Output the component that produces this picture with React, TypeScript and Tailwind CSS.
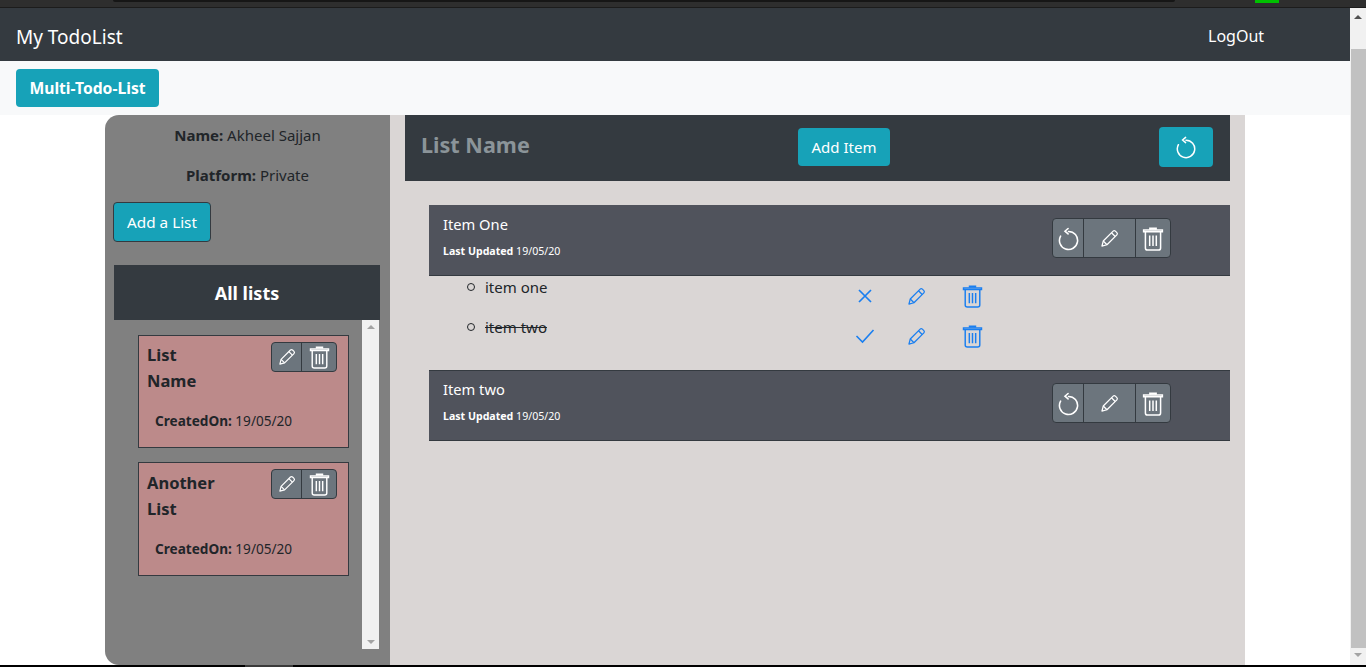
import {FC} from "react";

type IconProps = {className?: string};

const Trash: FC<IconProps> = ({className}) => (
    <svg viewBox="0 0 24 28" fill="none" stroke="currentColor" strokeWidth="1.7" className={className}>
        <path d="M1.5 6.5v-2h21v2z"/>
        <path d="M8.5 4.2V2.6h7v1.6" fill="currentColor"/>
        <path d="M3.5 6.5v18a2.4 2.4 0 0 0 2.4 2.4h12.2a2.4 2.4 0 0 0 2.4-2.4v-18"/>
        <path d="M8.3 10.5v12M12 10.5v12M15.7 10.5v12"/>
    </svg>
);

const Pencil: FC<IconProps> = ({className}) => (
    <svg viewBox="0 0 24 24" fill="none" stroke="currentColor" strokeWidth="1.6" strokeLinejoin="round" className={className}>
        <path d="M2.5 21.5l1.6-6.3L16.6 2.7a2 2 0 0 1 2.8 0l1.9 1.9a2 2 0 0 1 0 2.8L8.8 19.9z"/>
        <path d="M14.5 4.8l4.7 4.7M4.1 15.2l4.7 4.7"/>
    </svg>
);

const Reset: FC<IconProps> = ({className}) => (
    <svg viewBox="0 0 24 24" fill="none" stroke="currentColor" strokeWidth="1.5" strokeLinecap="round" className={className}>
        <path d="M12 5.2a8.7 8.7 0 1 1-7.6 4.5"/>
        <path d="M11.6 2.4L8.6 5l3 2.6"/>
    </svg>
);

const Cross: FC<IconProps> = ({className}) => (
    <svg viewBox="0 0 16 16" fill="none" stroke="currentColor" strokeWidth="1.7" className={className}>
        <path d="M2 2l12 12M14 2L2 14"/>
    </svg>
);

const Tick: FC<IconProps> = ({className}) => (
    <svg viewBox="0 0 20 16" fill="none" stroke="currentColor" strokeWidth="1.6" className={className}>
        <path d="M1.5 8l6 6L18.5 2"/>
    </svg>
);

const ListCard: FC<{first: string; second: string; className: string}> = ({first, second, className}) => (
    <div className={`relative ml-6 w-[211px] border border-[#343a40] bg-[#bc8a8a] ${className}`}>
        <div className="pl-2 text-[16.5px] font-bold leading-[26px] text-[#212529]">
            <p>{first}</p>
            <p>{second}</p>
        </div>
        <div className="absolute top-[6px] left-[132px] flex h-[30px] w-[66px] overflow-hidden rounded border border-[#343a40] bg-[#6c757d] text-white">
            <div className="flex w-[30px] items-center justify-center border-r border-[#343a40]">
                <Pencil className="h-[18px] w-[18px]"/>
            </div>
            <div className="flex flex-1 items-center justify-center">
                <Trash className="h-[24px] w-[21px]"/>
            </div>
        </div>
        <p className="mt-[17px] pl-4 text-[13.6px] text-[#212529]"><b>CreatedOn:</b> 19/05/20</p>
    </div>
);

const ItemBar: FC<{title: string; className?: string}> = ({title, className}) => (
    <div className={`ml-6 flex h-[71px] items-start border-y bg-[#50535c] pl-[14px] text-white ${className ?? ""}`}>
        <div className="w-[609px] pt-[6px]">
            <p className="text-[14.7px] leading-6">{title}</p>
            <p className="mt-[7px] text-[10.6px] leading-4"><b>Last Updated</b> 19/05/20</p>
        </div>
        <div className="mt-3 flex h-10 w-[119px] overflow-hidden rounded border border-[#343a40] bg-[#6c757d]">
            <div className="flex w-[31px] items-center justify-center border-r border-[#343a40]">
                <Reset className="h-[25px] w-[25px]"/>
            </div>
            <div className="flex w-[52px] items-center justify-center border-r border-[#343a40]">
                <Pencil className="h-[19px] w-[19px]"/>
            </div>
            <div className="flex flex-1 items-center justify-center">
                <Trash className="h-[25px] w-[22px]"/>
            </div>
        </div>
    </div>
);

const SubItem: FC<{label: string; done?: boolean}> = ({label, done}) => (
    <div className="flex h-10 text-[#1a7ff0]">
        <div className="flex w-[416px] pl-[38px]">
            <span className="mt-[7px] h-[8px] w-[8px] rounded-full border border-[#212529]"/>
            <span className={`ml-[10px] text-[15px] leading-[22px] text-[#212529] ${done ? "line-through" : ""}`}>{label}</span>
        </div>
        <div className="flex w-[152px] items-start pt-2">
            <div className="flex h-[24px] w-10 items-center justify-center">
                {done ? <Tick className="h-[16px] w-[20px]"/> : <Cross className="h-[16px] w-[16px]"/>}
            </div>
            <div className="flex h-[24px] w-[62px] items-center justify-center">
                <Pencil className="h-[19px] w-[19px]"/>
            </div>
            <div className="flex w-[50px] justify-center">
                <Trash className="h-[24px] w-[21px]"/>
            </div>
        </div>
    </div>
);

const App: FC = () => {
    return (
        <div className="flex h-[667px] w-[1366px] flex-col overflow-hidden bg-white font-['Noto_Sans','Open_Sans',sans-serif]">
            <div className="h-2 border-b border-[#1c1c1c] bg-[#2e2e2e] pl-[113px]">
                <div className="flex">
                    <div className="h-[2px] w-[1062px] rounded-b bg-[#161616]"/>
                    <div className="ml-[80px] h-[3px] w-6 bg-[#00c000]"/>
                </div>
            </div>
            <div className="flex min-h-0 flex-1">
                <div className="flex w-[1350px] flex-col">
                    <nav className="flex h-[53px] items-center justify-between bg-[#343a40] pl-4 pr-[62px] pt-1 text-white">
                        <span className="mt-[2px] text-[19px]">My TodoList</span>
                        <span className="-mt-[2px] w-[80px] text-[16px]">LogOut</span>
                    </nav>
                    <div className="h-[54px] bg-[#f8f9fa] pl-4 pt-2">
                        <button className="h-[38px] w-[143px] rounded bg-[#17a2b8] pt-[2px] text-[15.7px] font-bold text-white">Multi-Todo-List</button>
                    </div>
                    <main className="ml-[105px] flex min-h-0 w-[1140px] flex-1">
                        <aside className="flex w-[285px] flex-col rounded-l-[14px] bg-[#808080] text-[#212529]">
                            <p className="mt-2 text-center text-[15px] leading-6"><b>Name:</b> Akheel Sajjan</p>
                            <p className="mt-4 text-center text-[15px] leading-6"><b>Platform:</b> Private</p>
                            <button className="ml-2 mt-[15px] h-10 w-[98px] rounded border border-[#343a40] bg-[#17a2b8] text-[15.3px] text-white">Add a List</button>
                            <div className="ml-[9px] mt-[23px] flex h-[55px] w-[266px] items-center justify-center bg-[#343a40] pt-[2px] text-[18px] font-bold text-white">All lists</div>
                            <div className="ml-[9px] flex h-[329px] w-[265px]">
                                <div className="flex w-[248px] flex-col gap-[14px] pt-[15px]">
                                    <ListCard first="List" second="Name" className="h-[113px] pt-[6px]"/>
                                    <ListCard first="Another" second="List" className="h-[114px] pt-[7px]"/>
                                </div>
                                <div className="flex w-[17px] flex-col items-center justify-between bg-[#f1f1f1] py-[5px]">
                                    <span className="h-0 w-0 border-x-4 border-b-4 border-x-transparent border-b-[#a3a3a3]"/>
                                    <span className="h-0 w-0 border-x-4 border-t-4 border-x-transparent border-t-[#a3a3a3]"/>
                                </div>
                            </div>
                        </aside>
                        <section className="w-[855px] bg-[#dad6d5]">
                            <div className="ml-[15px] flex h-[66px] w-[825px] items-center bg-[#343a40] pb-[2px] pl-4 pr-[17px]">
                                <h2 className="mb-1 w-[377px] text-[21.6px] font-bold text-[#8b9499]">List Name</h2>
                                <button className="h-[38px] w-[92px] rounded bg-[#17a2b8] text-[15px] text-white">Add Item</button>
                                <button className="ml-auto flex h-10 w-[54px] items-center justify-center rounded bg-[#17a2b8] text-white">
                                    <Reset className="h-6 w-6"/>
                                </button>
                            </div>
                            <div className="ml-[15px] w-[825px] pt-6">
                                <ItemBar title="Item One" className="border-t-[#50535c] border-b-[#343a40]"/>
                                <div className="ml-6 h-[94px]">
                                    <SubItem label="item one"/>
                                    <SubItem label="item two" done/>
                                </div>
                                <ItemBar title="Item two" className="border-[#343a40]"/>
                            </div>
                        </section>
                    </main>
                </div>
                <div className="flex w-4 flex-col items-center bg-[#f1f1f1]">
                    <span className="mt-[7px] h-0 w-0 border-x-4 border-b-4 border-x-transparent border-b-[#505050]"/>
                    <div className="ml-[1px] mt-[30px] h-[599px] w-[15px] bg-[#c1c1c1]"/>
                    <span className="mt-[5px] h-0 w-0 border-x-4 border-t-4 border-x-transparent border-t-[#a3a3a3]"/>
                </div>
            </div>
            <div className="h-[2px] bg-black pl-[245px]">
                <div className="h-[2px] w-[48px] bg-[#3a3a3a]"/>
            </div>
        </div>
    );
};

export default App;
